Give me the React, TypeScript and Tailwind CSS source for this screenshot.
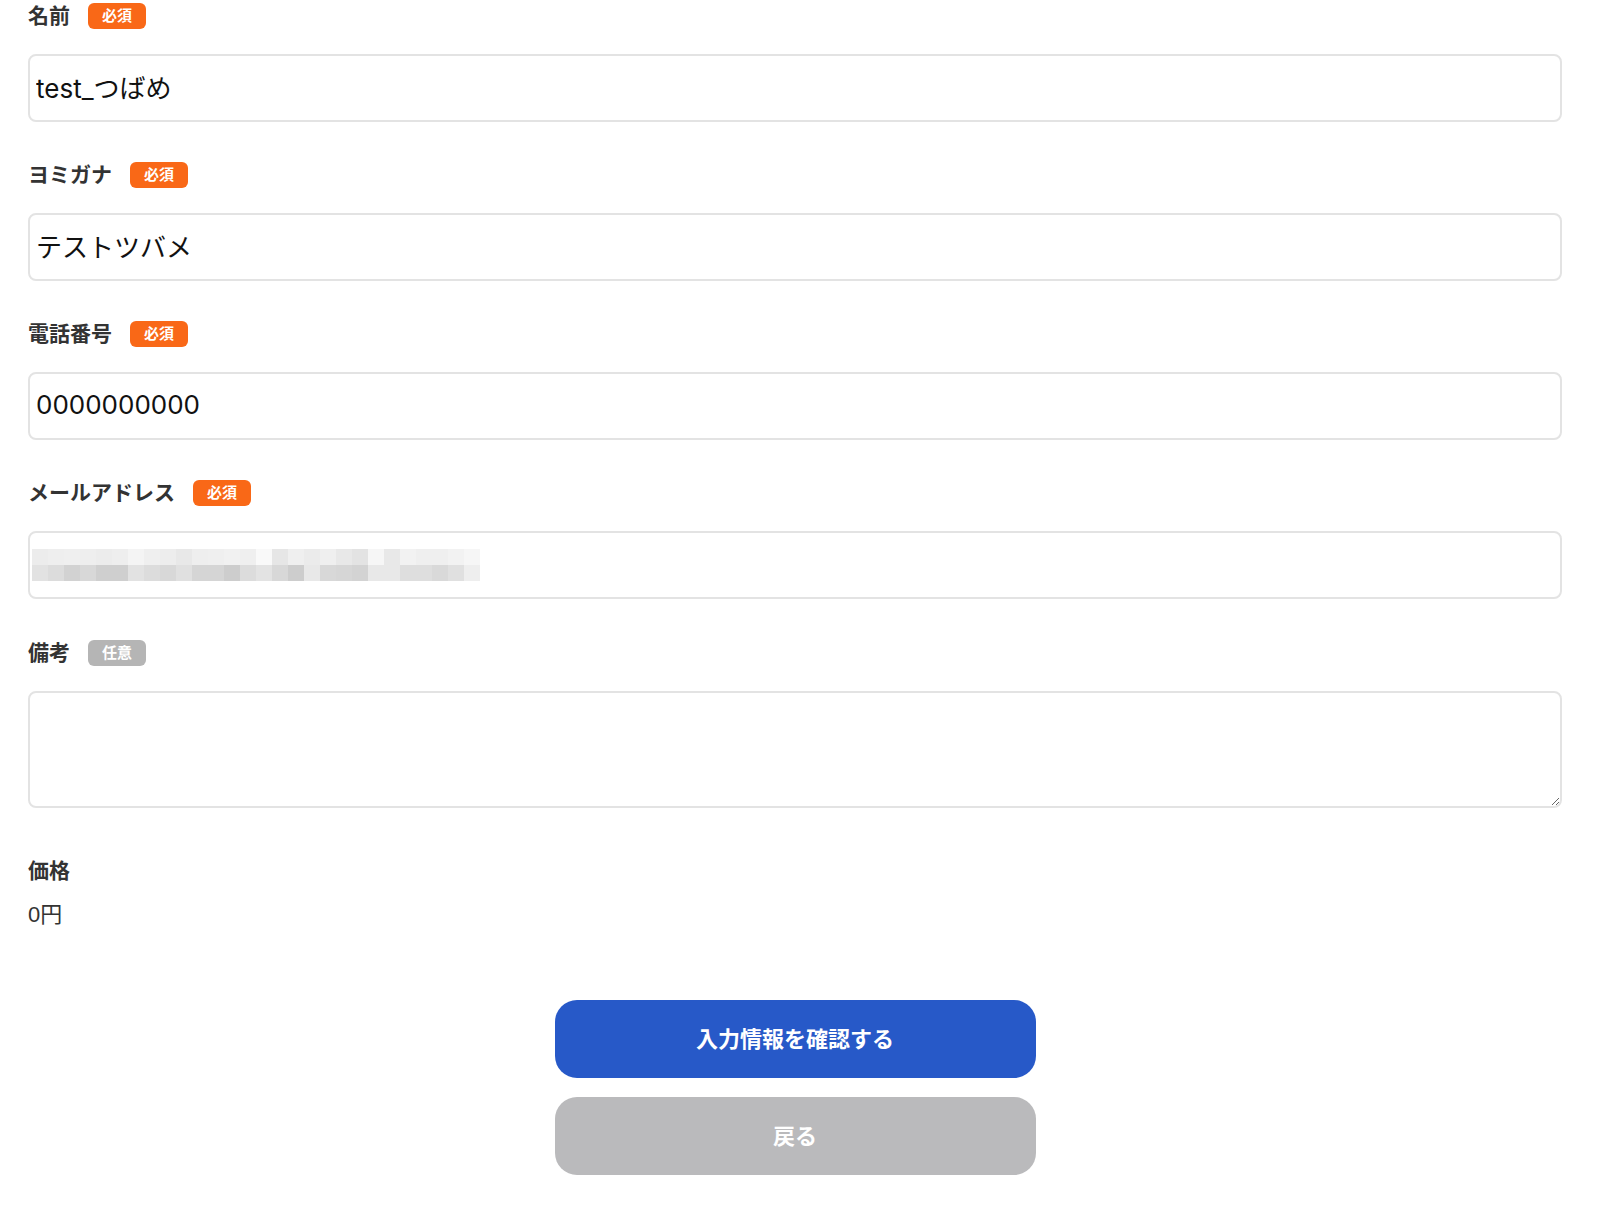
import { useState } from "react";

// Blue #2759C8 | Orange #F96817 | Grey btn #BABABC | Border #E3E3E3

const MOSAIC_TOP = [
  "#ececec", "#eeeeee", "#efefef", "#eeeeee", "#ececec", "#eeeeee", "#f4f4f4", "#efefef", "#ededed", "#e8e8e8",
  "#eeeeee", "#efefef", "#f1f1f1", "#efefef", "#f9f9f9", "#e6e6e6", "#efefef", "#ebebeb", "#efefef", "#e8e8e8",
  "#e3e3e3", "#f6f6f6", "#e8e8e8", "#f2f2f2", "#efefef", "#efefef", "#f2f2f2", "#f6f6f6",
];
const MOSAIC_BOTTOM = [
  "#e2e2e2", "#dcdcdc", "#d2d2d2", "#d8d8d8", "#cfcfcf", "#cfcfcf", "#e2e2e2", "#dcdcdc", "#d8d8d8", "#e0e0e0",
  "#d5d5d5", "#d5d5d5", "#cdcdcd", "#dcdcdc", "#e3e3e3", "#d8d8d8", "#cdcdcd", "#e8e8e8", "#d8d8d8", "#d6d6d6",
  "#d3d3d3", "#e8e8e8", "#e8e8e8", "#dedede", "#dedede", "#d9d9d9", "#e0e0e0", "#eeeeee",
];

const font = { fontFamily: '"Liberation Sans", "Noto Sans CJK JP", sans-serif' };
const inputFont = { fontFamily: 'Inter, "Noto Sans CJK JP", sans-serif' };

function Badge({ required }: { required: boolean }) {
  return (
    <span
      className={`ml-[18px] inline-flex h-[26px] w-[58px] items-center justify-center rounded-[6px] text-[15px] font-bold text-white ${
        required ? "bg-[#F96817]" : "bg-[#B5B5B5]"
      }`}
    >
      {required ? "必須" : "任意"}
    </span>
  );
}

function FieldLabel({ label, required }: { label: string; required: boolean }) {
  return (
    <div className="flex h-[26px] items-center">
      <span className="text-[21px] font-bold text-[#333333]">{label}</span>
      <Badge required={required} />
    </div>
  );
}

const inputClass =
  "mt-[25px] block h-[68px] w-full rounded-[8px] border-2 border-[#E3E3E3] bg-white px-[6px] pb-[3px] text-[26px] text-[#111111] outline-none";

export default function App() {
  const [form, setForm] = useState({
    name: "test_つばめ",
    kana: "テストツバメ",
    tel: "0000000000",
    note: "",
  });

  return (
    <div className="min-h-screen bg-white pb-10 pl-[28px] pr-[38px] pt-[3px]" style={font}>
      {/* 名前 */}
      <div className="mb-[40px]">
        <FieldLabel label="名前" required />
        <input className={inputClass} style={inputFont} value={form.name} onChange={(e) => setForm({ ...form, name: e.target.value })} />
      </div>

      {/* ヨミガナ */}
      <div className="mb-[40px]">
        <FieldLabel label="ヨミガナ" required />
        <input className={inputClass} style={inputFont} value={form.kana} onChange={(e) => setForm({ ...form, kana: e.target.value })} />
      </div>

      {/* 電話番号 */}
      <div className="mb-[40px]">
        <FieldLabel label="電話番号" required />
        <input className={inputClass} style={inputFont} value={form.tel} onChange={(e) => setForm({ ...form, tel: e.target.value })} />
      </div>

      {/* メールアドレス (masked) */}
      <div className="mb-[41px]">
        <FieldLabel label="メールアドレス" required />
        <div className="mt-[25px] flex h-[68px] w-full flex-col justify-center rounded-[8px] border-2 border-[#E3E3E3] bg-white pl-[2px]">
          <div className="flex">
            {MOSAIC_TOP.map((c, i) => (
              <div key={i} className="h-4 w-4" style={{ backgroundColor: c }} />
            ))}
          </div>
          <div className="flex">
            {MOSAIC_BOTTOM.map((c, i) => (
              <div key={i} className="h-4 w-4" style={{ backgroundColor: c }} />
            ))}
          </div>
        </div>
      </div>

      {/* 備考 */}
      <div>
        <FieldLabel label="備考" required={false} />
        <textarea
          className="mt-[25px] block h-[117px] w-full rounded-[8px] border-2 border-[#E3E3E3] bg-white px-[6px] py-2 text-[26px] text-[#111111] outline-none"
          style={inputFont}
          value={form.note}
          onChange={(e) => setForm({ ...form, note: e.target.value })}
        />
      </div>

      {/* 価格 */}
      <div className="mt-[50px]">
        <p className="text-[21px] font-bold leading-[26px] text-[#333333]">価格</p>
        <p className="mt-[18px] text-[22px] leading-[26px] text-[#333333]">0円</p>
      </div>

      {/* Buttons */}
      <div className="mt-[72px] flex flex-col items-center gap-[19px]">
        <button className="flex h-[78px] w-[481px] items-center justify-center rounded-[22px] bg-[#2759C8] text-[22px] font-bold text-white">
          入力情報を確認する
        </button>
        <button className="flex h-[78px] w-[481px] items-center justify-center rounded-[22px] bg-[#BABABC] text-[22px] font-bold text-white">
          戻る
        </button>
      </div>
    </div>
  );
}
